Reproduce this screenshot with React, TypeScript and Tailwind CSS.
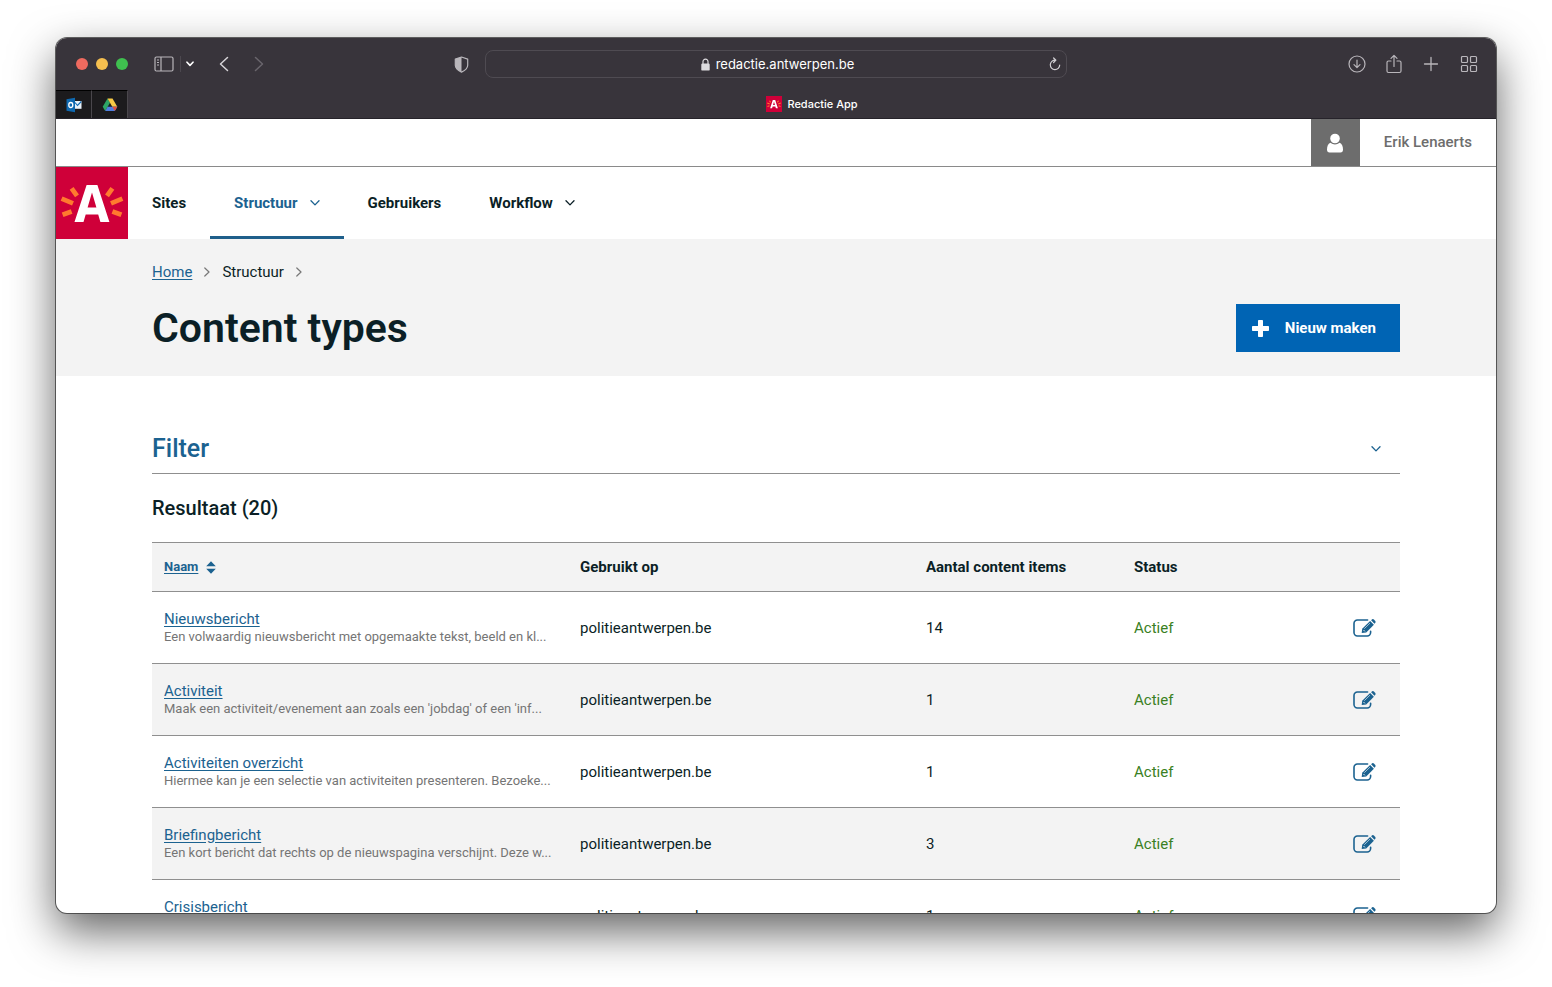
import type { ReactNode } from "react";

type ContentType = { name: string; description: string; site: string; items: number; status: string };

const contentTypes: ContentType[] = [
  { name: "Nieuwsbericht", description: "Een volwaardig nieuwsbericht met opgemaakte tekst, beeld en kl...", site: "politieantwerpen.be", items: 14, status: "Actief" },
  { name: "Activiteit", description: "Maak een activiteit/evenement aan zoals een 'jobdag' of een 'inf...", site: "politieantwerpen.be", items: 1, status: "Actief" },
  { name: "Activiteiten overzicht", description: "Hiermee kan je een selectie van activiteiten presenteren. Bezoeke...", site: "politieantwerpen.be", items: 1, status: "Actief" },
  { name: "Briefingbericht", description: "Een kort bericht dat rechts op de nieuwspagina verschijnt. Deze w...", site: "politieantwerpen.be", items: 3, status: "Actief" },
  { name: "Crisisbericht", description: "", site: "politieantwerpen.be", items: 1, status: "Actief" },
];

function Chevron({ className }: { className?: string }) {
  return (
    <svg viewBox="0 0 10 6" className={className} fill="none" stroke="currentColor" strokeWidth="1.3" strokeLinecap="round" strokeLinejoin="round" aria-hidden="true">
      <path d="M1 0.8 5 4.9 9 0.8" />
    </svg>
  );
}

function CrumbArrow() {
  return (
    <svg viewBox="0 0 6 10" className="h-[10px] w-[6px] text-[#777]" fill="none" stroke="currentColor" strokeWidth="1.2" strokeLinecap="round" strokeLinejoin="round" aria-hidden="true">
      <path d="M0.8 1 5 5 0.8 9" />
    </svg>
  );
}

function BrandMark({ className }: { className?: string }) {
  return (
    <svg viewBox="0 0 72 72" className={className} aria-hidden="true">
      <rect width="72" height="72" fill="#cf0039" />
      <path fill="#fff" fillRule="evenodd" d="M30.6 18h10.8L53.4 55h-9l-2.2-7.4H29.7L27.5 55h-9ZM36 25.6 31.6 40.6h8.8Z" />
      <g stroke="#ff7a2e" strokeWidth="4.8">
        <path d="M15.6 21.4 21 28.800M5.600 31.600 17 36.400M6.600 47.800 15.600 44.400" />
        <path d="M56.400 21.400 51 28.800M66.400 31.600 55 36.400M65.400 47.800 56.400 44.400" />
      </g>
    </svg>
  );
}

function EditIcon() {
  return (
    <svg viewBox="0 0 23 20" className="h-5 w-[23px]" aria-hidden="true">
      <path d="M14.6 2H4.4A3.4 3.4 0 0 0 1 5.400V14.600A3.400 3.400 0 0 0 4.400 18H14.200A3.400 3.400 0 0 0 17.600 14.600V13.200" fill="none" stroke="currentColor" strokeWidth="1.600" strokeLinecap="round" />
      <path d="M8.700 15.100 9.200 10.700 17.100 3 20.900 6.700 13.200 14.400Z" fill="currentColor" />
      <path d="M18.100 2.200 19.100 1.300Q20 0.600 20.900 1.400L22.300 2.900Q23 3.800 22.300 4.700L21.500 5.700Z" fill="currentColor" />
      <path d="M11.300 10.700 17 5.100" stroke="#fff" strokeWidth="0.600" />
      <path d="M10.500 12 11.900 13.400" stroke="#fff" strokeWidth="0.900" />
    </svg>
  );
}

function ToolButton({ label, className = "", children }: { label: string; className?: string; children: ReactNode }) {
  return (
    <button type="button" aria-label={label} className={`flex h-6 items-center justify-center ${className}`}>
      {children}
    </button>
  );
}

function BrowserChrome() {
  return (
    <header className="shrink-0 bg-[#38343b] font-[Inter,sans-serif] text-[#b9b6bb]">
      <div className="grid h-[52px] grid-cols-[1fr_582px_1fr] items-center">
        <div className="flex items-center pl-5">
          <div className="flex gap-2">
            <span className="size-3 rounded-full bg-[#ee6a5f]" />
            <span className="size-3 rounded-full bg-[#f5bf4f]" />
            <span className="size-3 rounded-full bg-[#3fc04f]" />
          </div>
          <ToolButton label="Sidebar" className="ml-[26px]">
            <svg viewBox="0 0 20 16" className="h-4 w-5" fill="none" stroke="currentColor" strokeWidth="1.200">
              <rect x="1" y="1" width="18" height="14" rx="1.500" />
              <path d="M7 1v14M3 4h2M3 6.500h2M3 9h2" />
            </svg>
          </ToolButton>
          <span className="ml-1.5 h-4 w-px bg-[#4c484f]" />
          <ToolButton label="Tabgroepen" className="ml-[5px] text-white">
            <svg viewBox="0 0 8 6" className="h-1.5 w-2" fill="none" stroke="currentColor" strokeWidth="1.600" strokeLinecap="round" strokeLinejoin="round">
              <path d="M1 1.200 4 4.400 7 1.200" />
            </svg>
          </ToolButton>
          <ToolButton label="Vorige" className="ml-[25px] text-[#d6d4d8]">
            <svg viewBox="0 0 10 16" className="h-4 w-2.5" fill="none" stroke="currentColor" strokeWidth="1.500" strokeLinecap="round" strokeLinejoin="round">
              <path d="M8.500 1.500 1.500 8l7 6.500" />
            </svg>
          </ToolButton>
          <ToolButton label="Volgende" className="ml-[25px] text-[#69656c]">
            <svg viewBox="0 0 10 16" className="h-4 w-2.5" fill="none" stroke="currentColor" strokeWidth="1.500" strokeLinecap="round" strokeLinejoin="round">
              <path d="M1.500 1.500 8.500 8l-7 6.500" />
            </svg>
          </ToolButton>
          <ToolButton label="Privacyrapport" className="mr-4 ml-auto">
            <svg viewBox="0 0 15 17" className="h-[17px] w-[15px]" aria-hidden="true">
              <path d="M7.500 1 1.300 3.100v6.100c0 3.300 2.800 5.300 6.200 6.900 3.400-1.600 6.200-3.600 6.200-6.900V3.100Z" fill="none" stroke="currentColor" strokeWidth="1.200" strokeLinejoin="round" />
              <path d="M7.500 1 1.300 3.100v6.100c0 3.300 2.800 5.300 6.200 6.900Z" fill="currentColor" />
            </svg>
          </ToolButton>
        </div>
        <div className="flex h-7 items-center rounded-lg border border-[#4f4b52] pr-[5px]">
          <div className="flex flex-1 items-center justify-center gap-1.5 pl-5">
            <svg viewBox="0 0 9 13" className="h-[13px] w-[9px]" aria-hidden="true">
              <rect x="0.300" y="5.600" width="8.400" height="7" rx="1.200" fill="#dddbdf" />
              <path d="M2 6V3.600a2.500 2.500 0 0 1 5 0V6" fill="none" stroke="#dddbdf" strokeWidth="1.200" />
            </svg>
            <span className="text-[13px] leading-5 text-white">redactie.antwerpen.be</span>
          </div>
          <button type="button" aria-label="Vernieuwen" className="text-[#d0ced2]">
            <svg viewBox="0 0 12 14" className="h-3.5 w-3" fill="none" stroke="currentColor" strokeWidth="1.200" strokeLinecap="round" strokeLinejoin="round">
              <path d="M6.300 3.200A4.700 4.700 0 1 0 10.700 8M4.600 1 6.900 3.200 4.600 5.500" />
            </svg>
          </button>
        </div>
        <div className="flex items-center justify-end gap-[19px] pr-[17px]">
          <ToolButton label="Downloads">
            <svg viewBox="0 0 18 18" className="size-[18px]" fill="none" stroke="currentColor" strokeWidth="1.200" strokeLinecap="round" strokeLinejoin="round">
              <circle cx="9" cy="9" r="8" />
              <path d="M9 5v7.500M6 9.700l3 3 3-3" />
            </svg>
          </ToolButton>
          <ToolButton label="Deel">
            <svg viewBox="0 0 18 20" className="h-5 w-[18px]" fill="none" stroke="currentColor" strokeWidth="1.200" strokeLinecap="round" strokeLinejoin="round">
              <path d="M6 7H3.500Q2 7 2 8.500v8.500Q2 18.500 3.500 18.500h11Q16 18.500 16 17V8.500Q16 7 14.500 7H12M9 12.500V1.500M6 4.300l3-3 3 3" />
            </svg>
          </ToolButton>
          <ToolButton label="Nieuw tabblad">
            <svg viewBox="0 0 18 18" className="size-[18px]" fill="none" stroke="currentColor" strokeWidth="1.300" strokeLinecap="round">
              <path d="M9 2.500v13M2.500 9h13" />
            </svg>
          </ToolButton>
          <ToolButton label="Tabbladoverzicht">
            <svg viewBox="0 0 20 18" className="h-[18px] w-5" fill="none" stroke="currentColor" strokeWidth="1.200">
              <rect x="2.500" y="1.500" width="6" height="6" rx="1" />
              <rect x="11.500" y="1.500" width="6" height="6" rx="1" />
              <rect x="2.500" y="10.500" width="6" height="6" rx="1" />
              <rect x="11.500" y="10.500" width="6" height="6" rx="1" />
            </svg>
          </ToolButton>
        </div>
      </div>
      <div className="flex h-[29px] border-b border-[#26232a]">
        <button type="button" aria-label="Outlook" className="flex w-9 items-center justify-center border-t border-r border-t-black border-r-[#4a474c] bg-[#1c1b1d]">
          <svg viewBox="0 0 16 16" className="size-4" aria-hidden="true">
            <path d="M0.500 2.300 9 0.800v14.400L0.500 13.700Z" fill="#0f69b0" />
            <rect x="9" y="4" width="6.500" height="7.800" fill="#e9f2fa" />
            <path d="M9 5.500 11.500 8.500 15.300 4.500" fill="none" stroke="#0f69b0" strokeWidth="1.100" />
            <ellipse cx="4.800" cy="8" rx="2" ry="2.500" fill="none" stroke="#fff" strokeWidth="1.300" />
          </svg>
        </button>
        <button type="button" aria-label="Google Drive" className="flex w-9 items-center justify-center border-t border-r border-t-black border-r-[#4a474c] bg-[#1c1b1d]">
          <svg viewBox="0 0 16 14" className="h-3.5 w-4" aria-hidden="true">
            <path d="M5.500 0.500 8 4.800 3.200 13 0.700 8.800Z" fill="#2da566" />
            <path d="M5.500 0.500h5L15.300 8.800h-5Z" fill="#f7c945" />
            <path d="M5.600 8.800h9.700L12.800 13H3.200Z" fill="#4f7fe0" />
            <path d="M10.300 8.800h5L12.800 13Z" fill="#e2513f" />
          </svg>
        </button>
        <div className="flex flex-1 items-center justify-center gap-[5px]">
          <BrandMark className="size-4" />
          <span className="text-[11px] leading-4 font-medium text-white">Redactie App</span>
        </div>
      </div>
    </header>
  );
}

function NavItem({ label, active = false, menu = false }: { label: string; active?: boolean; menu?: boolean }) {
  return (
    <a
      href="#"
      className={`flex items-center gap-3 border-y-[3px] border-t-transparent px-6 ${active ? "border-b-[#1f5f8b] text-[#1b6290]" : "border-b-transparent text-[#0b1f26]"}`}
    >
      {label}
      {menu && <Chevron className="h-1.5 w-2.5" />}
    </a>
  );
}

function SiteHeader() {
  return (
    <>
      <div className="flex h-12 justify-end border-b border-[#8a8a8a]">
        <div className="flex w-[49px] items-center justify-center bg-[#6d6d6d]">
          <svg viewBox="0 0 16 20" className="h-5 w-4" fill="#fff" aria-hidden="true">
            <circle cx="8" cy="5.500" r="4.800" />
            <path d="M3.300 9.800Q8 13 12.700 9.800 16 11.500 16 16.500 16 19.500 13.500 19.500h-11Q0 19.500 0 16.500 0 11.500 3.300 9.800Z" />
          </svg>
        </div>
        <span className="flex items-center px-6 text-[15px] font-medium text-[#6d6d6d]">Erik Lenaerts</span>
      </div>
      <nav className="flex h-[72px] text-[15px] font-bold">
        <a href="#" aria-label="Antwerpen">
          <BrandMark className="size-[72px]" />
        </a>
        <NavItem label="Sites" />
        <NavItem label="Structuur" active menu />
        <NavItem label="Gebruikers" />
        <NavItem label="Workflow" menu />
      </nav>
    </>
  );
}

function PageHeader() {
  return (
    <section className="bg-[#f3f3f3] px-24 pt-[22px] pb-6">
      <ol className="flex items-center gap-3 text-[15px] leading-[22px]">
        <li>
          <a href="#" className="text-[#1b6290] underline underline-offset-2">Home</a>
        </li>
        <li aria-hidden="true"><CrumbArrow /></li>
        <li>Structuur</li>
        <li aria-hidden="true"><CrumbArrow /></li>
      </ol>
      <div className="mt-[21px] flex items-center justify-between">
        <h1 className="text-[41px] leading-[48px] font-semibold">Content types</h1>
        <button type="button" className="flex h-12 items-center gap-4 bg-[#0064b4] pr-6 pl-4 text-[15px] font-bold text-white">
          <svg viewBox="0 0 17 17" className="size-[17px]" fill="currentColor" aria-hidden="true">
            <path d="M6 0.800Q6 0 6.800 0h3.400q0.800 0 0.800 0.800V6h5.200q0.800 0 0.800 0.800v3.400q0 0.800-0.800 0.800H11v5.200q0 0.800-0.800 0.800H6.800q-0.800 0-0.800-0.800V11H0.800Q0 11 0 10.200V6.800Q0 6 0.800 6H6Z" />
          </svg>
          Nieuw maken
        </button>
      </div>
    </section>
  );
}

function ResultsTable() {
  return (
    <table className="mt-5 w-full table-fixed border-collapse text-left text-[15px] leading-5">
      <thead>
        <tr className="h-[49px] border-y border-[#8f8f8f] bg-[#f3f3f3] font-bold">
          <th className="w-1/3 px-3 text-[13px]">
            <button type="button" className="flex items-center gap-2 text-[#1b6290]">
              <span className="underline underline-offset-2">Naam</span>
              <svg viewBox="0 0 10 13" className="h-[13px] w-2.5" fill="currentColor" aria-hidden="true">
                <path d="M5 0.300 9.800 5.300H0.200ZM5 12.700 9.800 7.700H0.200Z" />
              </svg>
            </button>
          </th>
          <th className="px-3">Gebruikt op</th>
          <th className="w-1/6 px-3">Aantal content items</th>
          <th className="w-1/6 px-3">Status</th>
          <th className="w-[70px]" aria-label="Bewerken" />
        </tr>
      </thead>
      <tbody>
        {contentTypes.map((type) => (
          <tr key={type.name} className="h-[72px] border-b border-[#8f8f8f] even:bg-[#f3f3f3]">
            <td className="px-3">
              <a href="#" className="block w-fit leading-[18px] text-[#1b6290] underline underline-offset-2">{type.name}</a>
              <p className="h-[18px] text-[13px] leading-[18px] whitespace-nowrap text-[#757575]">{type.description}</p>
            </td>
            <td className="px-3">{type.site}</td>
            <td className="px-3">{type.items}</td>
            <td className="px-3 text-[#3a8023]">{type.status}</td>
            <td className="pr-6">
              <button type="button" aria-label={`Bewerk ${type.name}`} className="ml-auto block text-[#1b6290]">
                <EditIcon />
              </button>
            </td>
          </tr>
        ))}
      </tbody>
    </table>
  );
}

export default function App() {
  return (
    <div className="flex h-screen flex-col overflow-hidden bg-white px-14 pt-[38px] pb-[74px]">
      <div className="flex min-h-0 flex-1 flex-col overflow-hidden rounded-[11px] bg-white font-[Roboto,sans-serif] text-[#0b1f26] shadow-[0_0_0_1px_rgba(60,60,60,0.8),0_18px_45px_rgba(0,0,0,0.62)]">
        <BrowserChrome />
        <div className="min-h-0 flex-1 overflow-hidden">
          <SiteHeader />
          <PageHeader />
          <main className="px-24 pt-[57px]">
            <button type="button" className="flex w-full items-center justify-between border-b border-[#8f8f8f] pr-[19px] pb-2 text-[#1b6290]">
              <span className="text-[25px] leading-8 font-medium">Filter</span>
              <Chevron className="h-1.5 w-2.5" />
            </button>
            <h2 className="mt-5 text-xl leading-7 font-medium">Resultaat (20)</h2>
            <ResultsTable />
          </main>
        </div>
      </div>
    </div>
  );
}
